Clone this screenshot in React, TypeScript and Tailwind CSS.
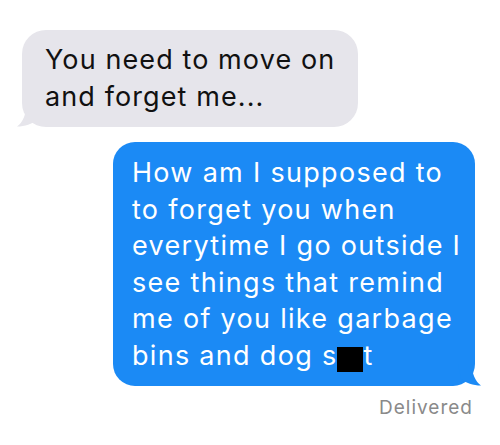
import React from 'react';

const font = { fontFamily: 'Inter, "Liberation Sans", Arial, sans-serif' };

function Tail({ side, color }: { side: 'left' | 'right'; color: string }) {
  // little hook at the bottom corner of a bubble
  if (side === 'left') {
    return (
      <svg className="absolute -left-[6px] bottom-0" width="24" height="22" viewBox="0 0 24 22" aria-hidden="true">
        <path d="M10 0 C10 10 7 17 1 21.5 C9 21.5 16 19 21 15 L24 0 Z" fill={color} />
      </svg>
    );
  }
  return (
    <svg className="absolute -right-[7px] bottom-0" width="24" height="22" viewBox="0 0 24 22" aria-hidden="true">
      <path d="M14 0 C14 10 17 17 23 21.5 C15 21.5 8 19 3 15 L0 0 Z" fill={color} />
    </svg>
  );
}

export default function App() {
  return (
    <div className="w-[500px] h-[445px] bg-white overflow-hidden pt-[30px]" style={font}>
      <div className="flex flex-col">
        {/* received */}
        <div className="relative ml-[22px] w-[336px] rounded-[24px] bg-[#e6e5eb] pl-[23px] pr-[10px] pt-[11px] pb-[12px]">
          <Tail side="left" color="#e6e5eb" />
          <p className="relative whitespace-nowrap text-[27px] leading-[37px] tracking-[1.1px] text-[#111]">
            You need to move on
            <br />
            and forget me...
          </p>
        </div>

        {/* sent */}
        <div className="relative mt-[15px] ml-[113px] w-[362px] rounded-[22px] bg-[#1b8af5] pl-[19px] pr-[8px] pt-[13px] pb-[12px]">
          <Tail side="right" color="#1b8af5" />
          <p className="relative whitespace-nowrap text-[27px] leading-[36.5px] tracking-[1.3px] text-white">
            How am I supposed to
            <br />
            to forget you when
            <br />
            everytime I go outside I
            <br />
            see things that remind
            <br />
            me of you like garbage
            <br />
            bins and dog s
            <span className="inline-block w-[26px] h-[25px] bg-black align-[-7px]" />
            t
          </p>
        </div>

        <div className="flex justify-end pr-[27px] mt-[10px]">
          <span className="text-[19px] leading-[24px] tracking-[1px] text-[#8a8a8a]">Delivered</span>
        </div>
      </div>
    </div>
  );
}
